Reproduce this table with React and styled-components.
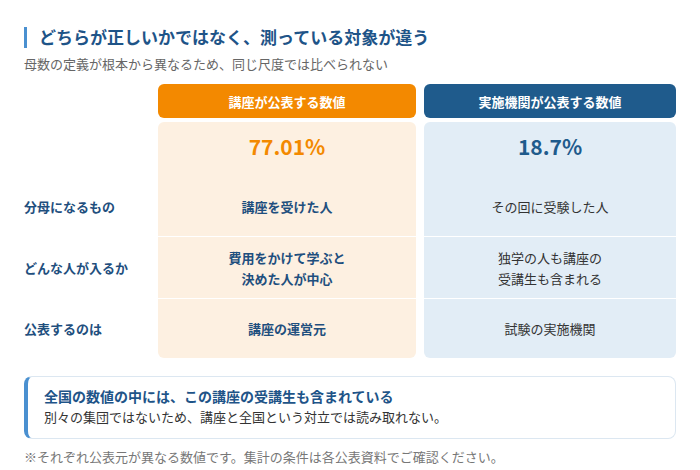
import React from "react";
import styled, { createGlobalStyle } from "styled-components";

const Global = createGlobalStyle`
  html, body { margin: 0; padding: 0; background: #ffffff; }
  body { font-family: "Noto Sans CJK JP", "Noto Sans", sans-serif; width: 700px; height: 470px; overflow: hidden; }
`;

const Page = styled.div`
  width: 700px;
  height: 470px;
  box-sizing: border-box;
  padding: 26px 24px 0 24px;
  display: flex;
  flex-direction: column;
`;

const Title = styled.h1`
  margin: 0;
  display: flex;
  align-items: center;
  gap: 12px;
  font-size: 17px;
  line-height: 22px;
  font-weight: 700;
  color: #1e5488;
  &::before {
    content: "";
    width: 3px;
    height: 21px;
    background: #4a90d0;
  }
`;

const Subtitle = styled.p`
  margin: 7px 0 0 0;
  font-size: 13px;
  line-height: 18px;
  color: #666;
`;

const Table = styled.div`
  margin-top: 11px;
  display: grid;
  grid-template-columns: 126px 258px 252px;
  grid-template-rows: 38px 54px 60px 62px 60px;
  column-gap: 8px;
`;

const Head = styled.div`
  background: ${p => (p.$tone === "orange" ? "#f38900" : "#1f5b8c")};
  color: #fff;
  border-radius: 6px;
  align-self: start;
  display: flex;
  align-items: center;
  justify-content: center;
  font-size: 13px;
  font-weight: 700;
  height: 34px;
`;

const Blank = styled.div``;

const Cell = styled.div`
  background: ${p => (p.$tone === "orange" ? "#fdf0e1" : "#e2edf6")};
  display: flex;
  flex-direction: column;
  align-items: center;
  justify-content: center;
  text-align: center;
  font-size: 13px;
  line-height: 21px;
  font-weight: ${p => (p.$tone === "orange" ? 700 : 400)};
  color: ${p => (p.$tone === "orange" ? "#1f4f7e" : "#333")};
  border-top: ${p => (p.$sep ? "1px solid #ffffff" : "none")};
  border-radius: ${p => (p.$first ? "6px 6px 0 0" : p.$last ? "0 0 6px 6px" : "0")};
`;

const Value = styled.div`
  font-size: 21px;
  font-weight: 700;
  line-height: 26px;
  color: ${p => (p.$tone === "orange" ? "#f38900" : "#1f5b8c")};
  margin-top: -6px;
`;

const Label = styled.div`
  display: flex;
  align-items: center;
  font-size: 13px;
  font-weight: 700;
  color: #1f4f7e;
`;

const Callout = styled.div`
  margin-top: 18px;
  border: 1px solid #dce7f1;
  border-left: 4px solid #4a90d0;
  border-radius: 8px;
  padding: 9px 16px 11px 16px;
  display: flex;
  flex-direction: column;
  gap: 1px;
`;

const CalloutTitle = styled.div`
  font-size: 14px;
  font-weight: 700;
  line-height: 20px;
  color: #1e5488;
`;

const CalloutText = styled.div`
  font-size: 13px;
  line-height: 20px;
  color: #333;
`;

const Note = styled.p`
  margin: 9px 0 0 0;
  font-size: 13px;
  line-height: 18px;
  color: #777;
`;

const rows = [
  { label: "分母になるもの", a: ["講座を受けた人"], b: ["その回に受験した人"] },
  { label: "どんな人が入るか", a: ["費用をかけて学ぶと", "決めた人が中心"], b: ["独学の人も講座の", "受講生も含まれる"] },
  { label: "公表するのは", a: ["講座の運営元"], b: ["試験の実施機関"] },
];

export default function App() {
  return (
    <>
      <Global />
      <Page>
        <Title>どちらが正しいかではなく、測っている対象が違う</Title>
        <Subtitle>母数の定義が根本から異なるため、同じ尺度では比べられない</Subtitle>
        <Table>
          <Blank />
          <Head $tone="orange">講座が公表する数値</Head>
          <Head $tone="blue">実施機関が公表する数値</Head>

          <Blank />
          <Cell $tone="orange" $first><Value $tone="orange">77.01%</Value></Cell>
          <Cell $tone="blue" $first><Value $tone="blue">18.7%</Value></Cell>

          {rows.map((r, i) => (
            <React.Fragment key={r.label}>
              <Label>{r.label}</Label>
              <Cell $tone="orange" $sep={i > 0} $last={i === rows.length - 1}>
                {r.a.map(t => <span key={t}>{t}</span>)}
              </Cell>
              <Cell $tone="blue" $sep={i > 0} $last={i === rows.length - 1}>
                {r.b.map(t => <span key={t}>{t}</span>)}
              </Cell>
            </React.Fragment>
          ))}
        </Table>
        <Callout>
          <CalloutTitle>全国の数値の中には、この講座の受講生も含まれている</CalloutTitle>
          <CalloutText>別々の集団ではないため、講座と全国という対立では読み取れない。</CalloutText>
        </Callout>
        <Note>※それぞれ公表元が異なる数値です。集計の条件は各公表資料でご確認ください。</Note>
      </Page>
    </>
  );
}
